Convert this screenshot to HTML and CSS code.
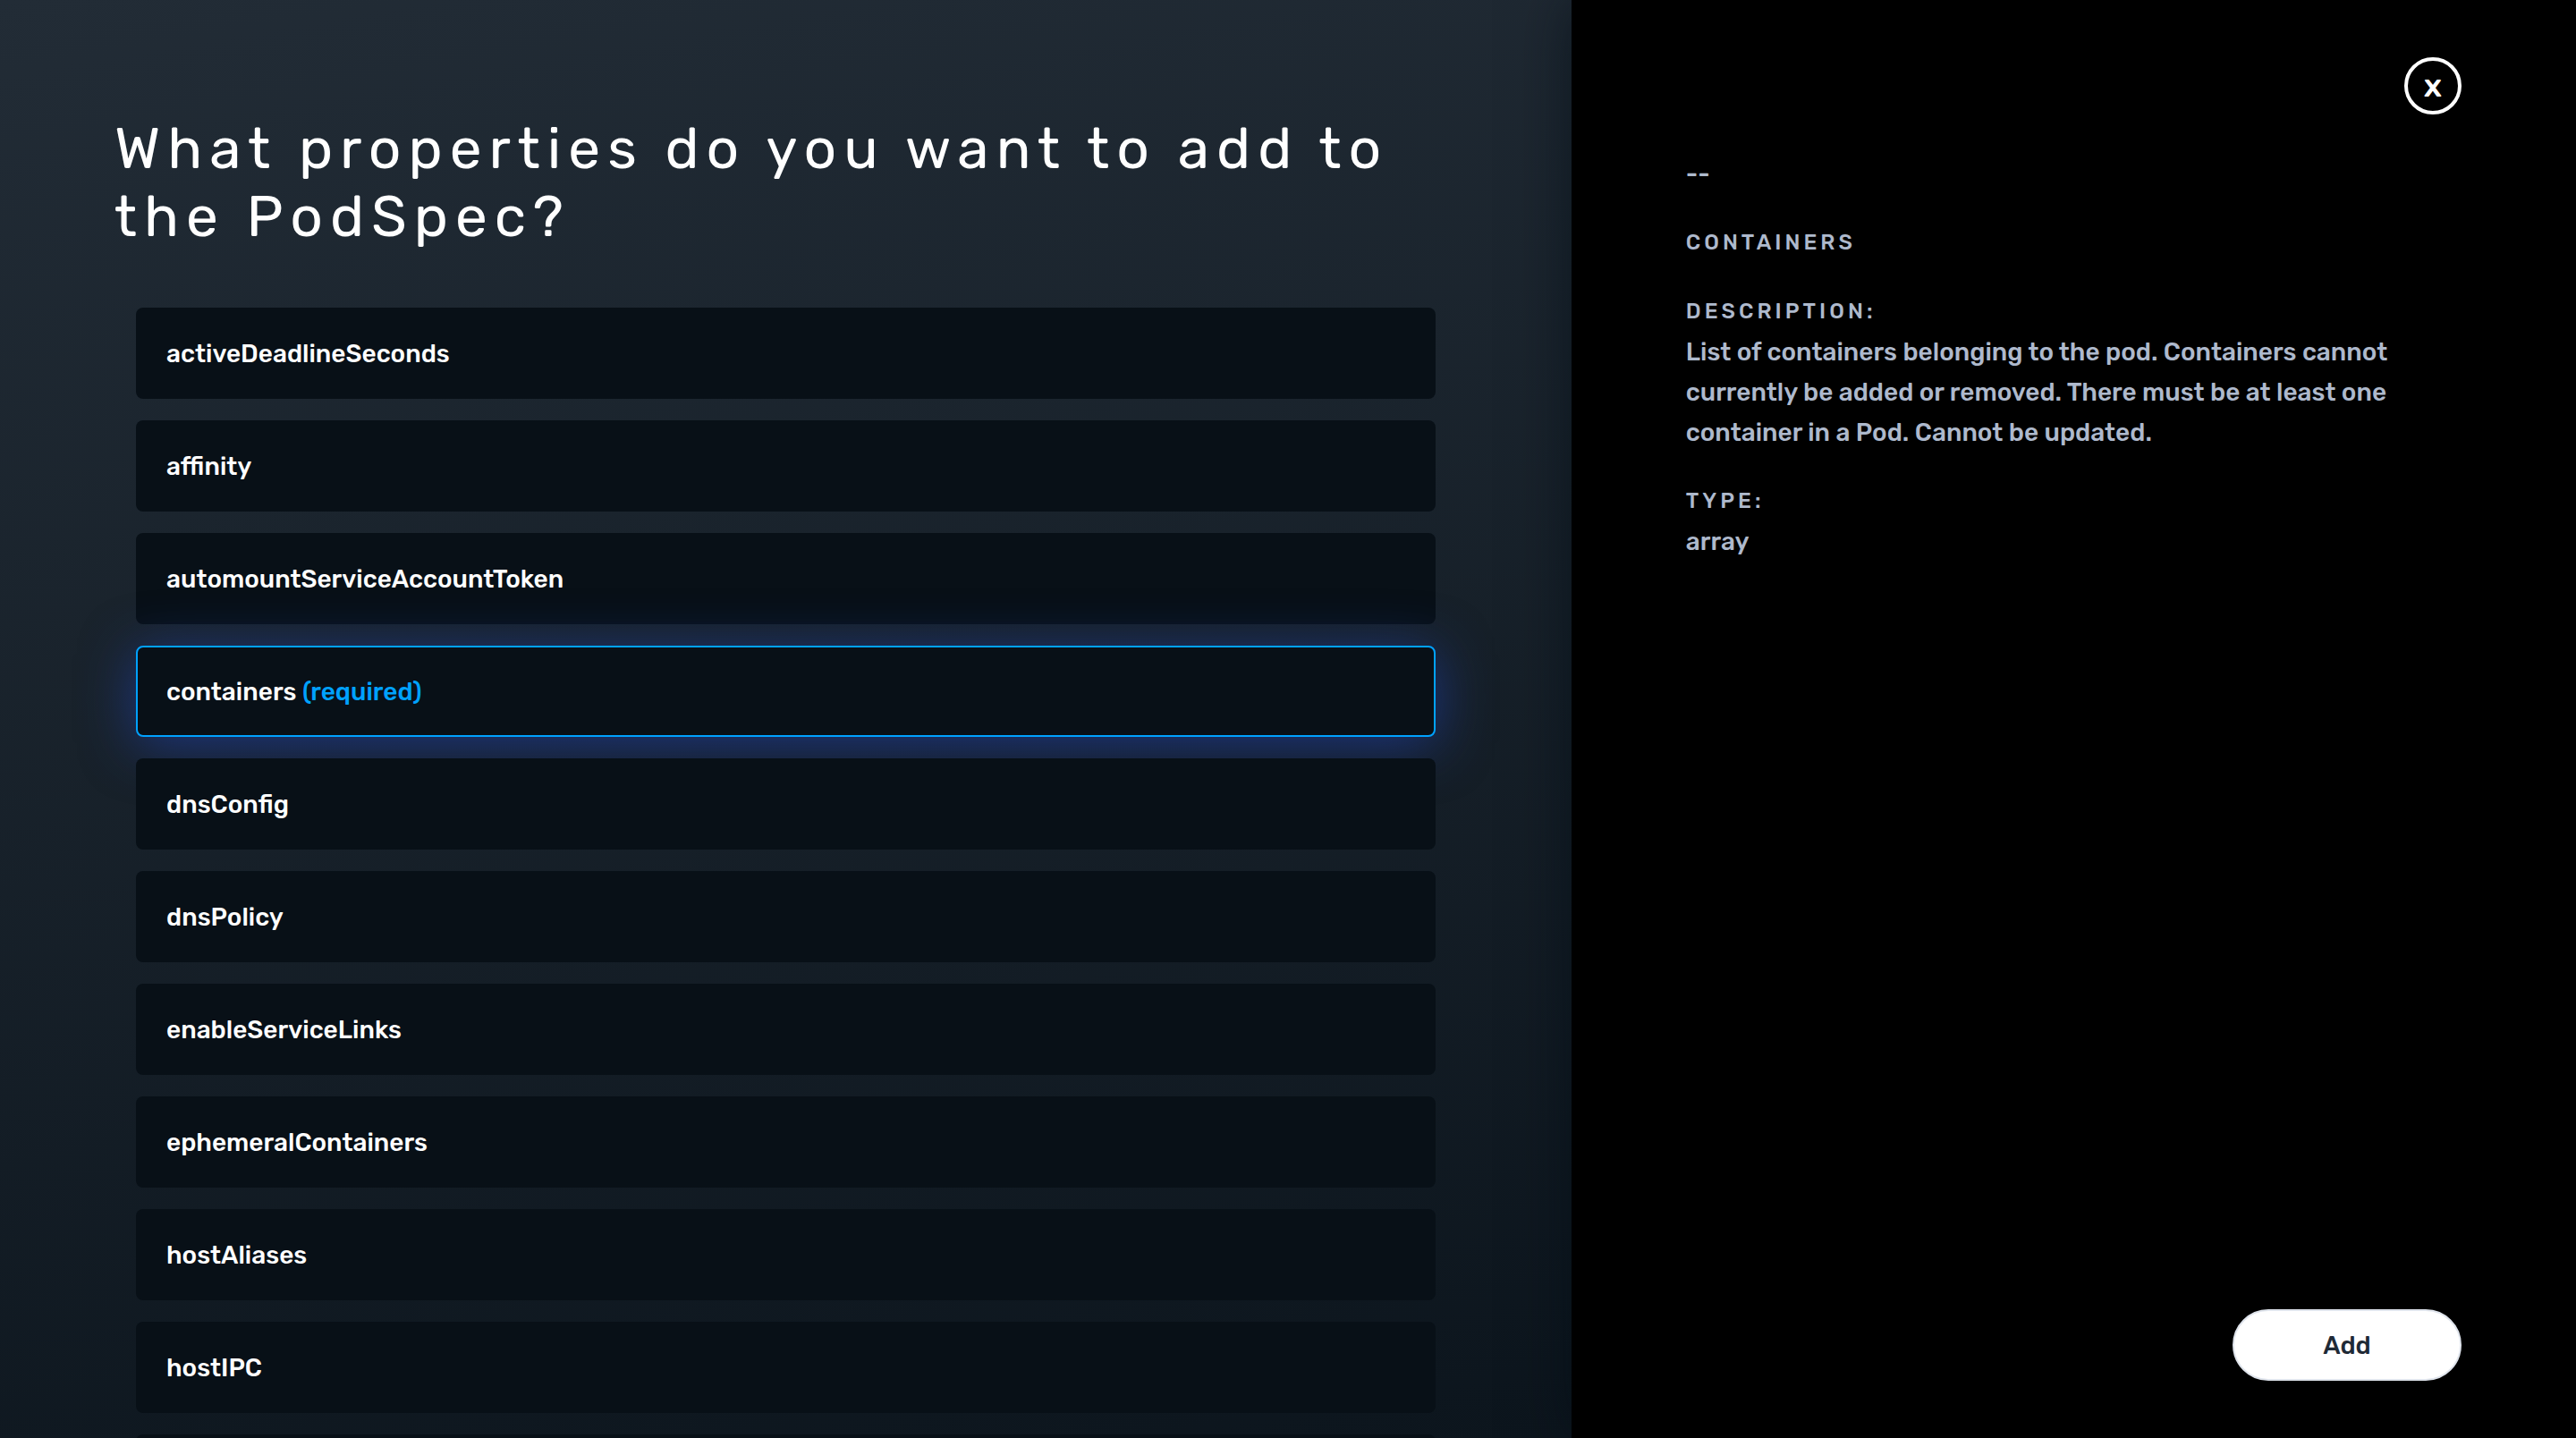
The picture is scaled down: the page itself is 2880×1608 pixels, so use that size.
FILE: index.html
```html
<!DOCTYPE html>
<html lang="en">
<head>
<meta charset="utf-8">
<title>PodSpec properties</title>
<link rel="stylesheet" href="styles.css">
</head>
<body>
<div class="layout">
  <main class="picker">
    <h1 class="picker-title">What properties do you want to add to the PodSpec?</h1>
    <ul class="property-list">
      <li><button type="button" class="property">activeDeadlineSeconds</button></li>
      <li><button type="button" class="property">affinity</button></li>
      <li><button type="button" class="property">automountServiceAccountToken</button></li>
      <li><button type="button" class="property is-selected" aria-pressed="true">containers <span class="required">(required)</span></button></li>
      <li><button type="button" class="property">dnsConfig</button></li>
      <li><button type="button" class="property">dnsPolicy</button></li>
      <li><button type="button" class="property">enableServiceLinks</button></li>
      <li><button type="button" class="property">ephemeralContainers</button></li>
      <li><button type="button" class="property">hostAliases</button></li>
      <li><button type="button" class="property">hostIPC</button></li>
      <li><button type="button" class="property" aria-label="Next property"></button></li>
    </ul>
  </main>
  <aside class="details">
    <button type="button" class="close" aria-label="Close">x</button>
    <div class="details-body">
      <p>--</p>
      <h2 class="label">CONTAINERS</h2>
      <section>
        <h3 class="label">DESCRIPTION:</h3>
        <p>List of containers belonging to the pod. Containers cannot currently be added or removed. There must be at least one container in a Pod. Cannot be updated.</p>
      </section>
      <section>
        <h3 class="label">TYPE:</h3>
        <p>array</p>
      </section>
    </div>
    <button type="button" class="add">Add</button>
  </aside>
</div>
</body>
</html>
```
FILE: styles.css
```css
* {
  box-sizing: border-box;
}

body {
  margin: 0;
  background: #000;
  color: #fff;
  font-family: Rubik, Roboto, "Liberation Sans", sans-serif;
  font-size: 28px;
  font-weight: 500;
}

h1, h2, h3, p, ul {
  margin: 0;
  padding: 0;
}

button {
  font: inherit;
  cursor: pointer;
}

.layout {
  display: grid;
  grid-template-columns: 61fr 39fr;
  height: 100vh;
  overflow: hidden;
}

.picker {
  padding: 128px 128px 0;
  overflow: hidden;
  background: linear-gradient(170deg, #222c36, #0c151d);
}

.picker-title {
  margin-bottom: 64px;
  font-size: 64px;
  font-weight: 400;
  line-height: 76px;
  letter-spacing: 8px;
}

.property-list {
  display: flex;
  flex-direction: column;
  gap: 24px;
  padding: 0 24px;
  list-style: none;
}

.property {
  display: block;
  width: 100%;
  height: 102px;
  padding: 0 32px;
  border: 2px solid transparent;
  border-radius: 8px;
  background: #081017 border-box;
  color: inherit;
  text-align: left;
}

.property.is-selected {
  border-color: #00a2ff;
  box-shadow: 0 8px 60px rgba(34, 68, 187, 0.6);
}

.required {
  color: #00a2ff;
}

.details {
  position: relative;
  display: flex;
  flex-direction: column;
  align-items: flex-end;
  padding: 64px 128px;
  background: #000;
  box-shadow: 0 0 60px rgba(0, 12, 20, 0.6);
  color: #aeb9cc;
}

.close {
  width: 64px;
  height: 64px;
  padding: 0;
  border: 4px solid #fff;
  border-radius: 50%;
  background: none;
  color: #fff;
  font-size: 36px;
  line-height: 48px;
}

.details-body {
  display: flex;
  flex-direction: column;
  gap: 32px;
  width: 100%;
  margin-top: 44px;
  line-height: 45px;
}

.label {
  font-size: 24px;
  font-weight: 500;
  letter-spacing: 4px;
}

.add {
  width: 256px;
  height: 80px;
  margin-top: auto;
  border: 2px solid #dfe4ec;
  border-radius: 40px;
  background: #fff;
  color: #1f2a36;
}
```
